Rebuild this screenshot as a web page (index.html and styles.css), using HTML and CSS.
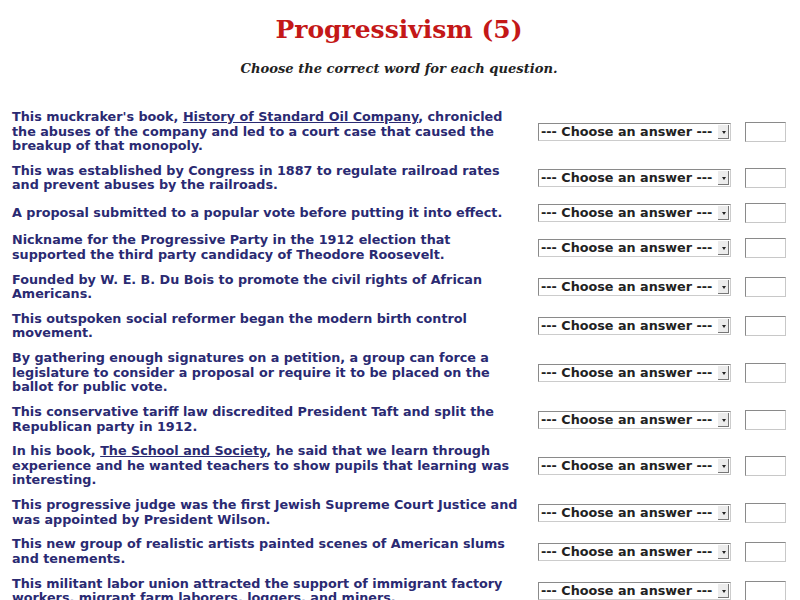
FILE: index.html
```html
<!DOCTYPE html>
<html lang="en">
<head>
    <meta charset="UTF-8">
    <meta name="viewport" content="width=device-width, initial-scale=1.0">
    <title>Progressivism (5)</title>
    <link rel="stylesheet" href="styles.css">
</head>
<body>
    <h1 class="title">Progressivism (5)</h1>
    <p class="instructions">Choose the correct word for each question.</p>

    <form class="quiz" id="quiz">
        <div class="question">This muckraker's book, <u>History of Standard Oil Company</u>, chronicled the abuses of the company and led to a court case that caused the breakup of that monopoly.</div>
        <span class="choice"><select name="q1"><option>--- Choose an answer ---</option></select></span>
        <input class="mark" type="text" name="m1">

        <div class="question">This was established by Congress in 1887 to regulate railroad rates and prevent abuses by the railroads.</div>
        <span class="choice"><select name="q2"><option>--- Choose an answer ---</option></select></span>
        <input class="mark" type="text" name="m2">

        <div class="question">A proposal submitted to a popular vote before putting it into effect.</div>
        <span class="choice"><select name="q3"><option>--- Choose an answer ---</option></select></span>
        <input class="mark" type="text" name="m3">

        <div class="question">Nickname for the Progressive Party in the 1912 election that supported the third party candidacy of Theodore Roosevelt.</div>
        <span class="choice"><select name="q4"><option>--- Choose an answer ---</option></select></span>
        <input class="mark" type="text" name="m4">

        <div class="question">Founded by W. E. B. Du Bois to promote the civil rights of African Americans.</div>
        <span class="choice"><select name="q5"><option>--- Choose an answer ---</option></select></span>
        <input class="mark" type="text" name="m5">

        <div class="question">This outspoken social reformer began the modern birth control movement.</div>
        <span class="choice"><select name="q6"><option>--- Choose an answer ---</option></select></span>
        <input class="mark" type="text" name="m6">

        <div class="question">By gathering enough signatures on a petition, a group can force a legislature to consider a proposal or require it to be placed on the ballot for public vote.</div>
        <span class="choice"><select name="q7"><option>--- Choose an answer ---</option></select></span>
        <input class="mark" type="text" name="m7">

        <div class="question">This conservative tariff law discredited President Taft and split the Republican party in 1912.</div>
        <span class="choice"><select name="q8"><option>--- Choose an answer ---</option></select></span>
        <input class="mark" type="text" name="m8">

        <div class="question">In his book, <u>The School and Society</u>, he said that we learn through experience and he wanted teachers to show pupils that learning was interesting.</div>
        <span class="choice"><select name="q9"><option>--- Choose an answer ---</option></select></span>
        <input class="mark" type="text" name="m9">

        <div class="question">This progressive judge was the first Jewish Supreme Court Justice and was appointed by President Wilson.</div>
        <span class="choice"><select name="q10"><option>--- Choose an answer ---</option></select></span>
        <input class="mark" type="text" name="m10">

        <div class="question">This new group of realistic artists painted scenes of American slums and tenements.</div>
        <span class="choice"><select name="q11"><option>--- Choose an answer ---</option></select></span>
        <input class="mark" type="text" name="m11">

        <div class="question">This militant labor union attracted the support of immigrant factory workers, migrant farm laborers, loggers, and miners.</div>
        <span class="choice"><select name="q12"><option>--- Choose an answer ---</option></select></span>
        <input class="mark" type="text" name="m12">
    </form>
</body>
</html>
```

FILE: styles.css
```css
body {
    margin: 0;
    padding: 0 14px 20px 12px;
    background-color: #fff;
    font-family: "DejaVu Sans", Verdana, sans-serif;
}
.title {
    margin: 14px 0 0;
    text-align: center;
    font-family: "DejaVu Serif", Georgia, serif;
    font-size: 25px;
    font-weight: bold;
    line-height: 32px;
    color: #c41818;
}
.instructions {
    margin: 15px 0 0;
    text-align: center;
    font-family: "DejaVu Serif", Georgia, serif;
    font-style: italic;
    font-weight: bold;
    font-size: 13.1px;
    line-height: 16px;
    color: #222;
}
.quiz {
    display: grid;
    grid-template-columns: 1fr 193px 41px;
    column-gap: 14px;
    row-gap: 10.1px;
    align-items: center;
    margin-top: 33px;
}
.question {
    font-size: 12.75px;
    font-weight: bold;
    line-height: 14.6px;
    color: #2a2a72;
}
.choice {
    position: relative;
    display: block;
    height: 18px;
}
.choice select {
    appearance: none;
    -webkit-appearance: none;
    display: block;
    width: 100%;
    height: 18px;
    margin: 0;
    padding: 0 0 0 2px;
    border: 1px solid #8a8a8a;
    border-right-color: #ccc;
    border-bottom-color: #ccc;
    border-radius: 0;
    background: #fff;
    font-family: "DejaVu Sans", Verdana, sans-serif;
    font-size: 12.75px;
    font-weight: bold;
    line-height: 16px;
    color: #222;
}
/* little dropdown button on the right edge */
.choice::after {
    content: "";
    position: absolute;
    top: 2px;
    right: 2px;
    width: 11px;
    height: 14px;
    background: #ececec;
    border-right: 1px solid #777;
    border-bottom: 1px solid #777;
    box-sizing: border-box;
}
.choice::before {
    content: "";
    position: absolute;
    top: 8px;
    right: 5px;
    width: 0;
    height: 0;
    border-left: 2.5px solid transparent;
    border-right: 2.5px solid transparent;
    border-top: 3px solid #222;
    z-index: 1;
}
.mark {
    display: block;
    width: 41px;
    height: 20px;
    box-sizing: border-box;
    margin: 0;
    padding: 0;
    border: 1px solid #c8c8c8;
    border-top-color: #8a8a8a;
    border-left-color: #8a8a8a;
    background: #fff;
}
```
